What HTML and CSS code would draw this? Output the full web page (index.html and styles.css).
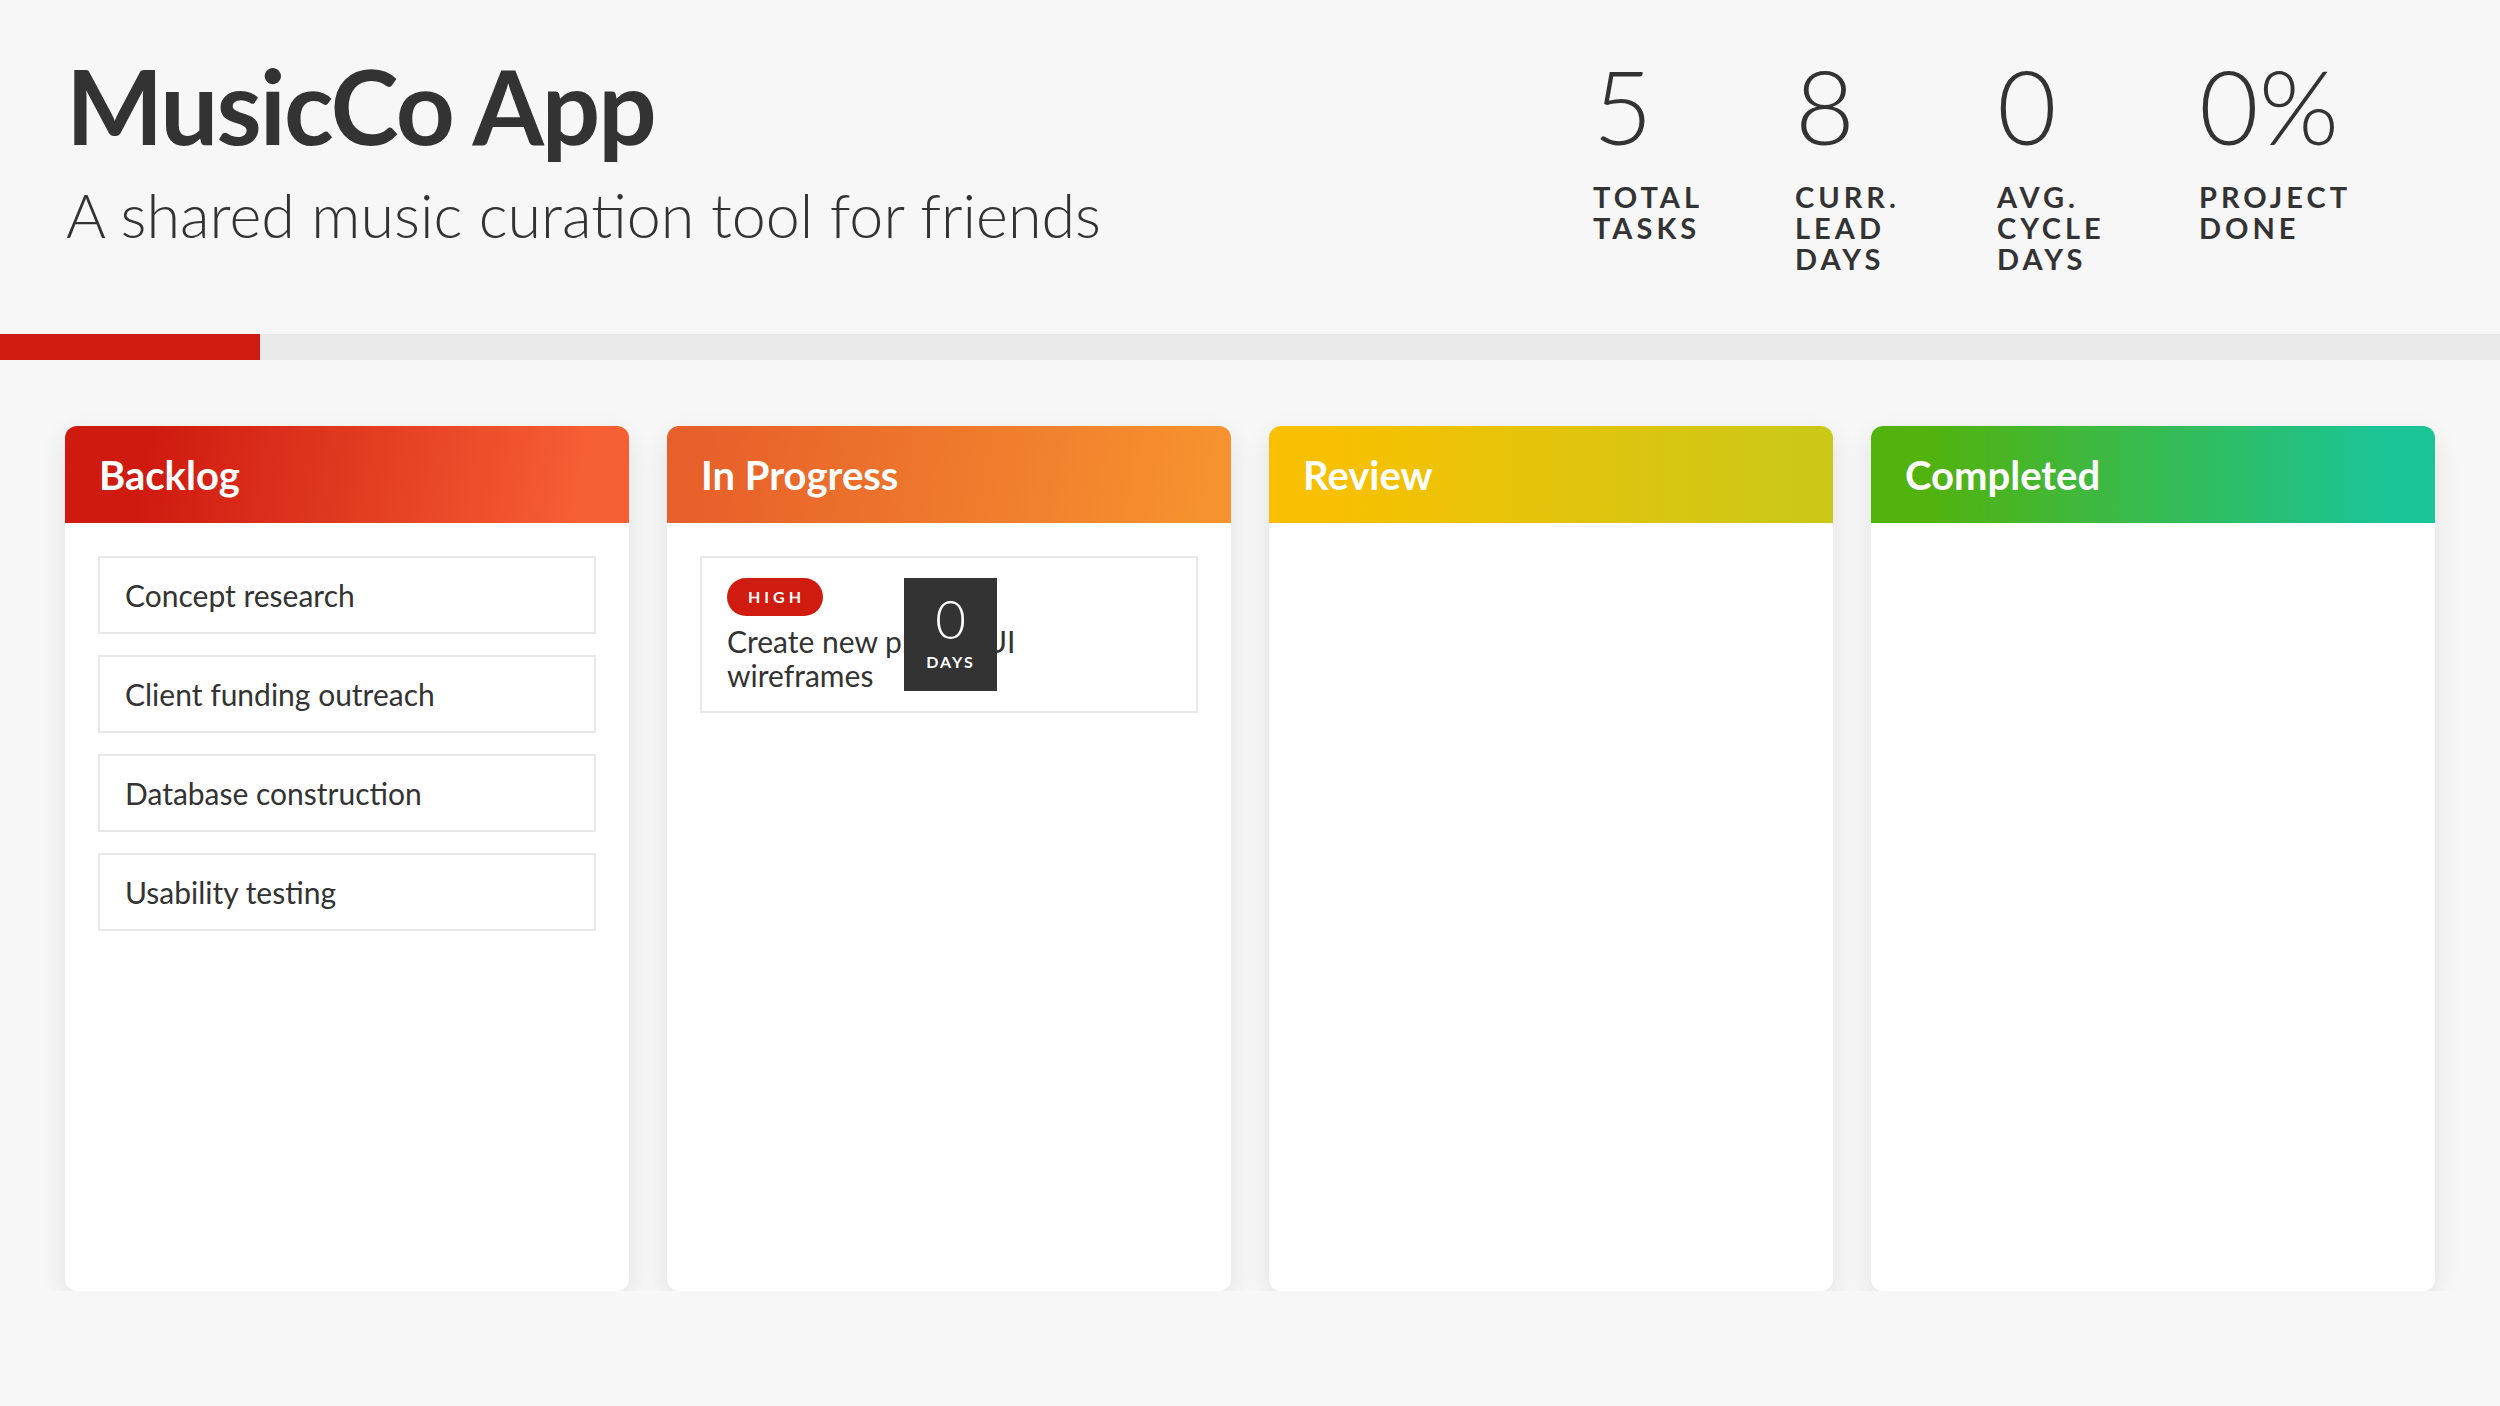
FILE: index.html
```html
<!DOCTYPE html>
<html lang="en">
<head>
    <meta charset="utf-8">
    <title>MusicCo App</title>
    <meta name="viewport" content="width=device-width, initial-scale=1.0">
    <link rel="stylesheet" href="styles.css">
</head>
<body>
    <header class="top">
        <div class="project">
            <h1 class="project-name">MusicCo App</h1>
            <p class="project-desc">A shared music curation tool for friends</p>
        </div>
        <div class="stats">
            <div class="stat">
                <div class="stat-num">5</div>
                <div class="stat-label">Total tasks</div>
            </div>
            <div class="stat">
                <div class="stat-num">8</div>
                <div class="stat-label">Curr. lead days</div>
            </div>
            <div class="stat">
                <div class="stat-num">0</div>
                <div class="stat-label">Avg. cycle days</div>
            </div>
            <div class="stat">
                <div class="stat-num">0%</div>
                <div class="stat-label">Project done</div>
            </div>
        </div>
    </header>

    <div class="progress">
        <div class="progress-fill" style="width: 10.4%"></div>
    </div>

    <main class="board">
        <section class="column backlog">
            <h2 class="column-title">Backlog</h2>
            <div class="column-body">
                <div class="task">Concept research</div>
                <div class="task">Client funding outreach</div>
                <div class="task">Database construction</div>
                <div class="task">Usability testing</div>
            </div>
        </section>
        <section class="column in-progress">
            <h2 class="column-title">In Progress</h2>
            <div class="column-body">
                <div class="task task-active">
                    <span class="priority">High</span>
                    <div class="task-name">Create new project UI wireframes</div>
                    <div class="days">
                        <span class="days-num">0</span>
                        <span class="days-label">Days</span>
                    </div>
                </div>
            </div>
        </section>
        <section class="column review">
            <h2 class="column-title">Review</h2>
            <div class="column-body"></div>
        </section>
        <section class="column completed">
            <h2 class="column-title">Completed</h2>
            <div class="column-body"></div>
        </section>
    </main>
</body>
</html>
```

FILE: styles.css
```css
* {
    box-sizing: border-box;
}
body {
    font-family: Lato, "Open Sans", sans-serif;
    margin: 0;
    padding: 0;
    background-color: #f7f7f7;
    color: #333;
}
.top {
    display: flex;
    justify-content: space-between;
    align-items: flex-start;
    min-height: 334px;
    padding: 54px 141px 0 66px;
}
.project-name {
    margin: 0;
    font-size: 103px;
    line-height: 1;
    font-weight: 700;
    letter-spacing: -2px;
}
.project-desc {
    margin: 27px 0 0;
    font-size: 61px;
    line-height: 1;
    font-weight: 300;
}
.stats {
    display: flex;
    gap: 42px;
}
.stat {
    width: 160px;
}
.stat-num {
    font-size: 103px;
    line-height: 1;
    font-weight: 300;
}
.stat-label {
    width: min-content;
    margin-top: 24px;
    font-size: 29px;
    line-height: 31px;
    font-weight: 700;
    letter-spacing: 4px;
    text-transform: uppercase;
}
.progress {
    height: 26px;
    background-color: #eaeaea;
}
.progress-fill {
    height: 100%;
    background-color: #d01b10;
}
.board {
    display: grid;
    grid-template-columns: repeat(4, 1fr);
    gap: 38px;
    padding: 66px 65px 0;
}
.column {
    height: 865px;
    background: #fff;
    border-radius: 12px;
    overflow: hidden;
    box-shadow: 0 10px 28px rgba(0, 0, 0, 0.09);
}
.column-title {
    display: flex;
    align-items: center;
    height: 97px;
    margin: 0;
    padding-left: 34px;
    font-size: 40px;
    font-weight: 700;
    color: #fff;
}
.backlog .column-title {
    background: linear-gradient(100deg, #cf1a10 15%, #f65e33 90%);
}
.in-progress .column-title {
    background: linear-gradient(100deg, #e75f2a 5%, #f6922f 95%);
}
.review .column-title {
    background: linear-gradient(90deg, #f8c000 10%, #ccc818 95%);
}
.completed .column-title {
    background: linear-gradient(90deg, #52b20e 10%, #1bc495 90%);
}
.column-body {
    display: flex;
    flex-direction: column;
    gap: 21px;
    padding: 33px;
}
.task {
    position: relative;
    padding: 19px 25px;
    border: 2px solid #e8e8e8;
    background: #fff;
    font-size: 30px;
    line-height: 36px;
}
.task-active {
    padding-top: 20px;
}
.priority {
    display: inline-block;
    height: 38px;
    padding: 0 18px 0 21px;
    border-radius: 19px;
    background-color: #d01b10;
    color: #fff;
    font-size: 16px;
    line-height: 38px;
    font-weight: 700;
    letter-spacing: 4px;
    text-transform: uppercase;
    vertical-align: top;
}
.task-name {
    max-width: 320px;
    margin-top: 8px;
    line-height: 34px;
}
.days {
    position: absolute;
    top: 20px;
    left: 202px;
    display: flex;
    flex-direction: column;
    align-items: center;
    width: 93px;
    height: 113px;
    padding-top: 14px;
    background-color: #333;
    color: #fff;
}
.days-num {
    font-size: 53px;
    line-height: 1;
    font-weight: 300;
}
.days-label {
    margin-top: 9px;
    font-size: 16px;
    line-height: 1;
    font-weight: 700;
    letter-spacing: 2px;
    text-transform: uppercase;
}
```
